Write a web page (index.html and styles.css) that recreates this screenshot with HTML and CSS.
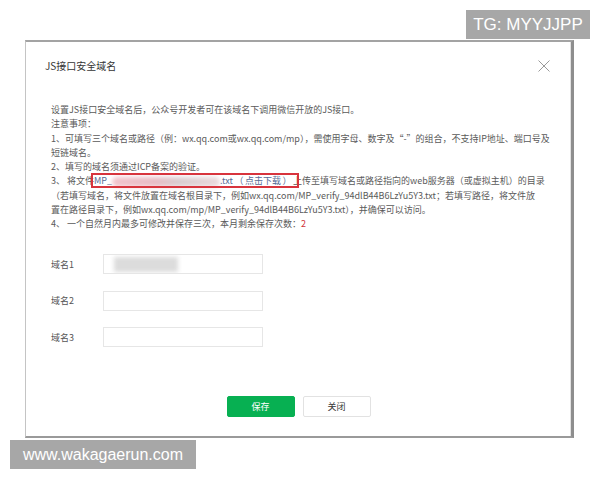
FILE: index.html
```html
<!DOCTYPE html>
<html lang="zh-CN">
<head>
<meta charset="utf-8">
<title>JS接口安全域名</title>
<link rel="stylesheet" href="styles.css">
</head>
<body>
<div class="page">
  <div class="dialog">
    <div class="dlg-head">
      <div class="dlg-title">JS接口安全域名</div>
      <svg class="dlg-close" width="12" height="12" viewBox="0 0 12 12"><path d="M0.5 0.5L11.5 11.5M11.5 0.5L0.5 11.5" stroke="#9a9a9a" stroke-width="1" fill="none"/></svg>
    </div>
    <div class="dlg-body">
      <div class="notes">
        <div class="ln">设置JS接口安全域名后，公众号开发者可在该域名下调用微信开放的JS接口。</div>
        <div class="ln">注意事项：</div>
        <div class="ln">1、可填写三个域名或路径（例：wx.qq.com或wx.qq.com/mp），需使用字母、数字及“-”的组合，不支持IP地址、端口号及</div>
        <div class="ln">短链域名。</div>
        <div class="ln">2、填写的域名须通过ICP备案的验证。</div>
        <div class="ln">3、 将文件<span class="dl"><span class="link">MP_<span class="blur"></span>.txt<span class="par">（</span>点击下载<span class="par">）</span></span></span>上传至填写域名或路径指向的web服务器（或虚拟主机）的目录</div>
        <div class="ln">（若填写域名，将文件放置在域名根目录下，例如wx.qq.com/MP_verify_94dlB44B6LzYu5Y3.txt；若填写路径，将文件放</div>
        <div class="ln">置在路径目录下，例如wx.qq.com/mp/MP_verify_94dlB44B6LzYu5Y3.txt），并确保可以访问。</div>
        <div class="ln">4、 一个自然月内最多可修改并保存三次，本月剩余保存次数：<span class="count">2</span></div>
      </div>
      <div class="form">
        <div class="row"><span class="lbl">域名1</span><div class="field"><span class="blob"></span></div></div>
        <div class="row"><span class="lbl">域名2</span><div class="field"></div></div>
        <div class="row"><span class="lbl">域名3</span><div class="field"></div></div>
      </div>
      <div class="actions">
        <button class="btn btn-primary">保存</button>
        <button class="btn">关闭</button>
      </div>
    </div>
  </div>
</div>
<div class="wm wm-tg">TG: MYYJJPP</div>
<div class="wm wm-site">www.wakagaerun.com</div>
</body>
</html>
```

FILE: styles.css
```css
html, body {
  margin: 0;
  padding: 0;
}
body {
  width: 600px;
  height: 480px;
  background: #fff;
  font-family: "Noto Sans CJK SC", sans-serif;
  position: relative;
  overflow: hidden;
}
.page {
  padding: 40px 0 0 25px;
}
.dialog {
  box-sizing: border-box;
  width: 549px;
  height: 398px;
  background: #fff;
  border-top: 2px solid #a3a3a3;
  border-left: 1px solid #c4c4c4;
  border-right: 3px solid #8e8e8e;
  border-bottom: 2px solid #9a9a9a;
  box-shadow: inset -1px 0 0 #e2e2e2;
  display: flex;
  flex-direction: column;
}
.dlg-head {
  display: flex;
  justify-content: space-between;
  align-items: center;
  height: 12px;
  padding: 18px 21px 0 19px;
}
.dlg-title {
  font-size: 10px;
  line-height: 12px;
  color: #353535;
}
.dlg-close {
  display: block;
}
.dlg-body {
  padding-top: 31px;
}
.notes {
  padding-left: 25px;
  font-size: 9px;
  line-height: 14.25px;
  color: #5a5a5a;
}
.ln {
  white-space: nowrap;
}
.link {
  color: #576b95;
}
.par {
  margin: 0 1.5px;
}
.dl {
  position: relative;
}
.dl::after {
  content: "";
  position: absolute;
  left: -3px;
  right: -6px;
  top: -1px;
  bottom: -1px;
  border: 2px solid #d8343d;
}
.blur {
  display: inline-block;
  width: 108px;
  height: 10px;
  vertical-align: middle;
  border-radius: 5px;
  background: linear-gradient(90deg, #f2c3cc, #e8bcc5 40%, #d9cdd0 62%, #ead9dc);
  filter: blur(2px);
}
.count {
  color: #d0343a;
}
.form {
  margin-top: 23px;
  padding-left: 25px;
  display: flex;
  flex-direction: column;
  gap: 16.5px;
}
.row {
  display: flex;
  align-items: center;
  height: 20px;
}
.lbl {
  width: 52px;
  font-size: 9px;
  color: #555;
}
.field {
  box-sizing: border-box;
  width: 160px;
  height: 20px;
  border: 1px solid #e6e6e6;
  position: relative;
  overflow: hidden;
}
.blob {
  position: absolute;
  left: 10px;
  top: 2px;
  width: 64px;
  height: 15px;
  background: #dcdcdc;
  filter: blur(2px);
}
.actions {
  margin-top: 49px;
  display: flex;
  justify-content: center;
  gap: 8px;
}
.btn {
  box-sizing: border-box;
  width: 68px;
  height: 21px;
  padding: 0;
  border: 1px solid #e2e2e2;
  border-radius: 2px;
  background: #fff;
  color: #353535;
  font-family: inherit;
  font-size: 9px;
}
.btn-primary {
  background: #07b052;
  border-color: #07b052;
  color: #fff;
}
.wm {
  position: absolute;
  background: #a7a7a7;
  color: #fff;
  font-family: "Liberation Sans", Arial, sans-serif;
  display: flex;
  align-items: center;
  justify-content: center;
}
.wm-tg {
  left: 466px;
  top: 10px;
  width: 124px;
  height: 29px;
  font-size: 17px;
}
.wm-site {
  left: 10px;
  top: 440px;
  width: 186px;
  height: 29px;
  font-size: 16px;
}
```
